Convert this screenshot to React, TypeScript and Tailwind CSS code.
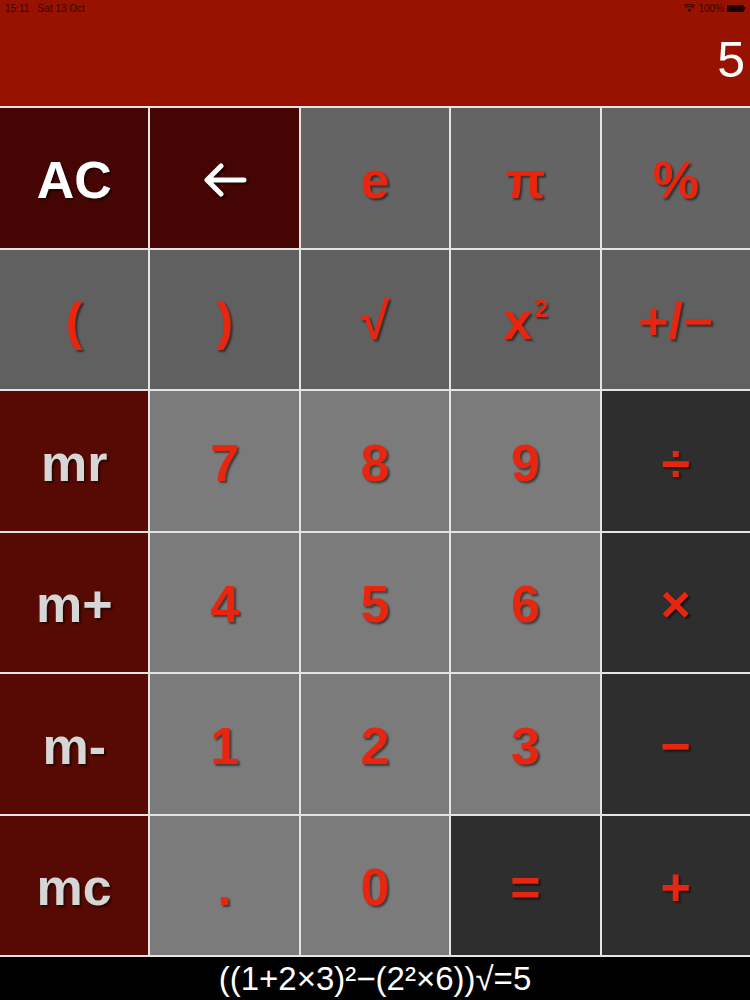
import React from "react";

type Key = { label: React.ReactNode; bg: string; fg: string };

const red = "text-[#e8260f]";

const BackArrow = () => (
  <svg width="46" height="36" viewBox="0 0 46 36" className="[filter:drop-shadow(2px_2px_1px_rgba(0,0,0,0.5))]">
    <path
      d="M42 18 H6 M19 4 L5 18 L19 32"
      stroke="#ffffff"
      strokeWidth="5"
      strokeLinecap="round"
      strokeLinejoin="round"
      fill="none"
    />
  </svg>
);

const keys: Key[] = [
  { label: "AC", bg: "bg-[#450503]", fg: "text-white" },
  { label: <BackArrow />, bg: "bg-[#450503]", fg: "text-white" },
  { label: "e", bg: "bg-[#646464]", fg: red },
  { label: "π", bg: "bg-[#646464]", fg: red },
  { label: "%", bg: "bg-[#646464]", fg: red },

  { label: "(", bg: "bg-[#606060]", fg: red },
  { label: ")", bg: "bg-[#606060]", fg: red },
  { label: "√", bg: "bg-[#606060]", fg: red },
  {
    label: (
      <span className="flex items-start">
        <span>x</span>
        <span className="text-[24px] mt-[2px] ml-[2px]">2</span>
      </span>
    ),
    bg: "bg-[#606060]",
    fg: red,
  },
  { label: "+/−", bg: "bg-[#606060]", fg: red },

  { label: "mr", bg: "bg-[#560a03]", fg: "text-[#d6d6d6]" },
  { label: "7", bg: "bg-[#7b7b7b]", fg: red },
  { label: "8", bg: "bg-[#7b7b7b]", fg: red },
  { label: "9", bg: "bg-[#7b7b7b]", fg: red },
  { label: "÷", bg: "bg-[#2e2e2e]", fg: red },

  { label: "m+", bg: "bg-[#560a03]", fg: "text-[#d6d6d6]" },
  { label: "4", bg: "bg-[#7b7b7b]", fg: red },
  { label: "5", bg: "bg-[#7b7b7b]", fg: red },
  { label: "6", bg: "bg-[#7b7b7b]", fg: red },
  { label: "×", bg: "bg-[#2e2e2e]", fg: red },

  { label: "m-", bg: "bg-[#560a03]", fg: "text-[#d6d6d6]" },
  { label: "1", bg: "bg-[#7b7b7b]", fg: red },
  { label: "2", bg: "bg-[#7b7b7b]", fg: red },
  { label: "3", bg: "bg-[#7b7b7b]", fg: red },
  { label: "−", bg: "bg-[#2e2e2e]", fg: red },

  { label: "mc", bg: "bg-[#560a03]", fg: "text-[#d6d6d6]" },
  { label: ".", bg: "bg-[#7b7b7b]", fg: red },
  { label: "0", bg: "bg-[#7b7b7b]", fg: red },
  { label: "=", bg: "bg-[#2e2e2e]", fg: red },
  { label: "+", bg: "bg-[#2e2e2e]", fg: red },
];

const StatusBar = () => (
  <div className="flex items-center justify-between h-[16px] px-[5px] text-[10px] text-[#3a0800] font-['Liberation_Sans',Arial,sans-serif]">
    <span>15:11&nbsp;&nbsp;&nbsp;Sat 13 Oct</span>
    <span className="flex items-center gap-[3px]">
      <svg width="11" height="8" viewBox="0 0 11 8">
        <path d="M5.5 8 L3.6 5.8 A2.8 2.8 0 0 1 7.4 5.8 Z" fill="#3a0800" />
        <path d="M1.8 3.9 A5.2 5.2 0 0 1 9.2 3.9" stroke="#3a0800" strokeWidth="1.3" fill="none" />
        <path d="M0.3 2.2 A7.4 7.4 0 0 1 10.7 2.2" stroke="#3a0800" strokeWidth="1.3" fill="none" />
      </svg>
      <span>100%</span>
      <span className="flex items-center">
        <span className="w-[17px] h-[7px] bg-[#1a0300] rounded-[1px]" />
        <span className="w-[1px] h-[3px] bg-[#1a0300]" />
      </span>
    </span>
  </div>
);

export default function App() {
  return (
    <div className="w-[750px] h-[1000px] bg-black flex flex-col overflow-hidden font-['Liberation_Sans',Arial,sans-serif]">
      <div className="h-[106px] bg-[#971200] flex flex-col">
        <StatusBar />
        <div className="flex-1 flex items-center justify-end pr-[5px] pb-[2px] text-white text-[50px] leading-none">
          5
        </div>
      </div>

      <div className="h-[851px] bg-[#e4e4e4] grid grid-cols-5 grid-rows-6 gap-[2px] py-[2px]">
        {keys.map((k, i) => (
          <div
            key={i}
            className={`${k.bg} ${k.fg} [text-shadow:2px_2px_2px_rgba(0,0,0,0.5)] flex items-center justify-center pt-[4px] text-[52px] font-bold leading-none`}
          >
            {k.label}
          </div>
        ))}
      </div>

      <div className="flex-1 flex items-center justify-center text-white text-[33px] leading-none">
        ((1+2×3)²−(2²×6))√=5
      </div>
    </div>
  );
}
